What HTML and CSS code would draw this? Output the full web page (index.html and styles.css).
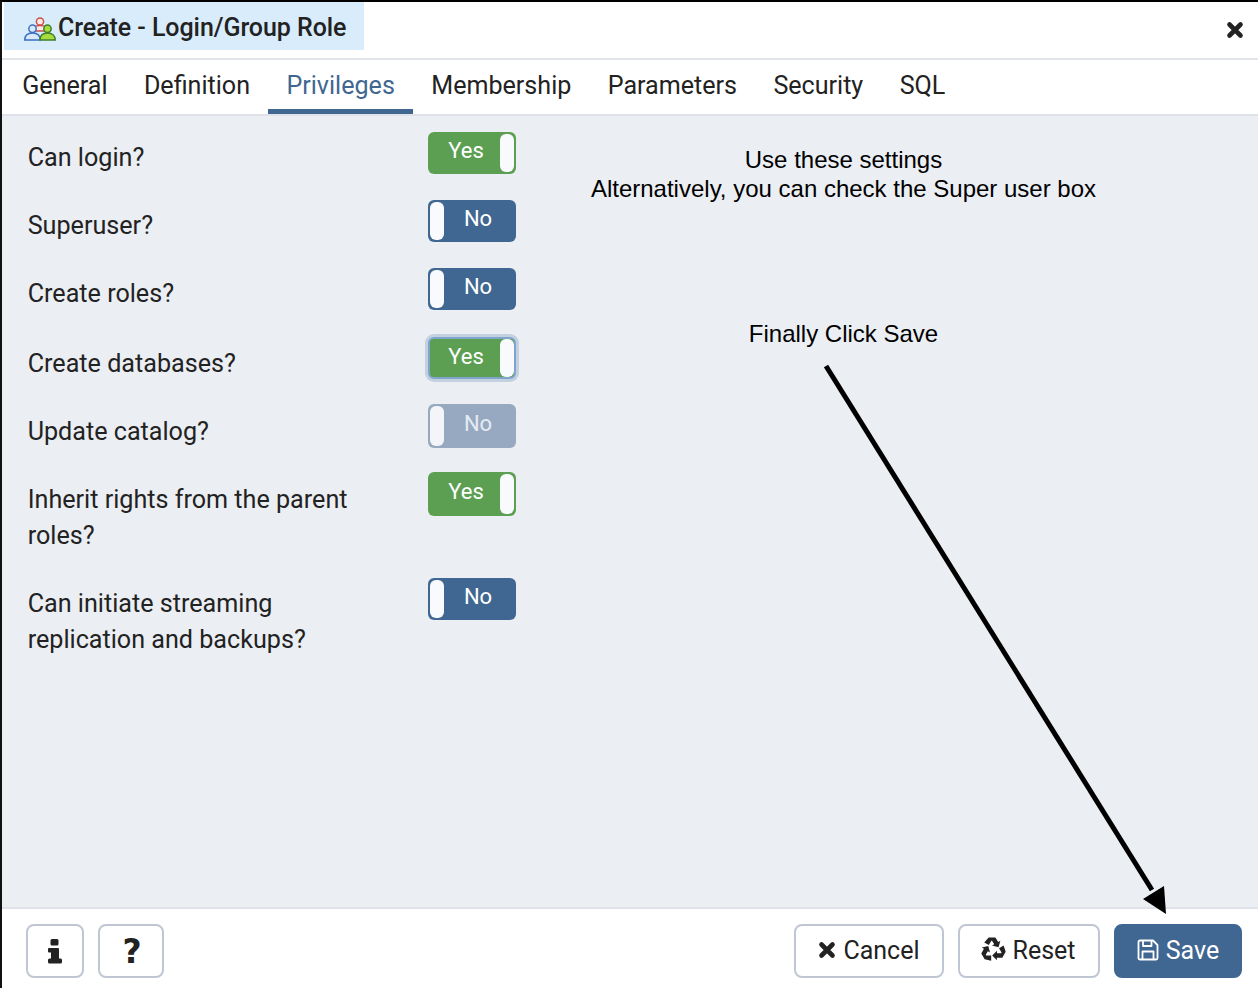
FILE: index.html
```html
<!DOCTYPE html>
<html lang="en">
<head>
  <meta charset="UTF-8" />
  <title>Create - Login/Group Role</title>
  <link rel="stylesheet" href="styles.css">
</head>
<body>
  <div class="dialog">
    <header class="titlebar">
      <div class="title">
        <svg class="title-icon" viewBox="0 0 32 24" width="32" height="24">
          <g fill="#fbe9e8" stroke="#c9504c" stroke-width="1.500">
            <circle cx="16" cy="4.500" r="3.600"/>
            <path d="M8 14c0-3.500 3.200-5.500 8-5.500s8 2 8 5.500z"/>
          </g>
          <g fill="#d9e8fa" stroke="#3a6fc4" stroke-width="1.500">
            <circle cx="8.500" cy="11.800" r="3.700"/>
            <path d="M.8 23c0-4.500 3-7 7.700-7s7.700 2.500 7.700 7z"/>
          </g>
          <g fill="#a8dc3c" stroke="#3f7d2c" stroke-width="1.500">
            <circle cx="23.500" cy="11.800" r="3.700"/>
            <path d="M16 23c0-4.500 3-7 7.500-7s7.700 2.500 7.700 7z"/>
          </g>
        </svg>
        <span>Create - Login/Group Role</span>
      </div>
      <svg class="close-icon" viewBox="0 0 18 18" width="18" height="18">
        <path d="M3.500 3.500l11 11M14.500 3.500l-11 11" stroke="#222" stroke-width="4.600" stroke-linecap="round"/>
      </svg>
    </header>

    <nav class="tabs">
      <a class="tab">General</a>
      <a class="tab">Definition</a>
      <a class="tab active">Privileges</a>
      <a class="tab">Membership</a>
      <a class="tab">Parameters</a>
      <a class="tab">Security</a>
      <a class="tab">SQL</a>
    </nav>

    <main class="panel">
      <form class="privileges">
        <div class="row">
          <label class="row-label">Can login?</label>
          <div class="switch yes"><span class="switch-text">Yes</span><span class="handle"></span></div>
        </div>
        <div class="row">
          <label class="row-label">Superuser?</label>
          <div class="switch no"><span class="handle"></span><span class="switch-text">No</span></div>
        </div>
        <div class="row">
          <label class="row-label">Create roles?</label>
          <div class="switch no"><span class="handle"></span><span class="switch-text">No</span></div>
        </div>
        <div class="row tall">
          <label class="row-label">Create databases?</label>
          <div class="switch yes focused"><span class="switch-text">Yes</span><span class="handle"></span></div>
        </div>
        <div class="row tall">
          <label class="row-label">Update catalog?</label>
          <div class="switch no disabled"><span class="handle"></span><span class="switch-text">No</span></div>
        </div>
        <div class="row tall wrap">
          <label class="row-label">Inherit rights from the parent roles?</label>
          <div class="switch yes"><span class="switch-text">Yes</span><span class="handle"></span></div>
        </div>
        <div class="row">
          <label class="row-label">Can initiate streaming replication and backups?</label>
          <div class="switch no"><span class="handle"></span><span class="switch-text">No</span></div>
        </div>
      </form>

      <aside class="notes">
        <p class="note-settings">Use these settings<br>Alternatively, you can check the Super user box</p>
        <p class="note-save">Finally Click Save</p>
      </aside>
    </main>

    <footer class="footer">
      <div class="footer-group">
        <button class="btn btn-info" type="button">
          <svg viewBox="0 0 14 26" width="14" height="26">
            <path d="M4 1h5a1.500 1.500 0 0 1 1.500 1.500v3.500a1.500 1.500 0 0 1-1.500 1.500h-5a1.500 1.500 0 0 1-1.500-1.500v-3.500a1.500 1.500 0 0 1 1.500-1.500zM2 10h8a1 1 0 0 1 1 1v9.500h1.500a1.500 1.500 0 0 1 1.500 1.500v2a1.500 1.500 0 0 1-1.500 1.500h-11a1.500 1.500 0 0 1-1.500-1.500v-2a1.500 1.500 0 0 1 1.500-1.500h1.500v-6h-2a1 1 0 0 1-1-1v-2.500a1 1 0 0 1 1-1z" fill="#222"/>
          </svg>
        </button>
        <button class="btn btn-help" type="button">?</button>
      </div>
      <div class="footer-group">
        <button class="btn btn-cancel" type="button">
          <svg viewBox="0 0 18 18" width="18" height="18">
            <path d="M3.500 3.500l11 11M14.500 3.500l-11 11" stroke="#222" stroke-width="4.600" stroke-linecap="round"/>
          </svg>
          Cancel
        </button>
        <button class="btn btn-reset" type="button">
          <svg viewBox="0 0 24 24" width="26" height="26">
            <g fill="#222">
              <path id="rc" d="M8 1.300h6.200l2.600 4.300 2-1.200-1.700 6-6-1.600 2-1.200-2-3.300h-.6l-2.400 4-4.200-2.400z"/>
              <use href="#rc" transform="rotate(120 12 12.500)"/>
              <use href="#rc" transform="rotate(240 12 12.500)"/>
            </g>
          </svg>
          Reset
        </button>
        <button class="btn btn-save" type="button">
          <svg viewBox="0 0 22 22" width="22" height="22">
            <g fill="none" stroke="#fff" stroke-width="1.800" stroke-linejoin="round">
              <path d="M3 1.500h13l4.500 4.500v13a1.500 1.500 0 0 1-1.500 1.500h-16a1.500 1.500 0 0 1-1.500-1.500v-16a1.500 1.500 0 0 1 1.500-1.500z"/>
              <path d="M6 1.500v5.500h8.500v-5.500M5.500 20.500v-8h11v8"/>
            </g>
          </svg>
          Save
        </button>
      </div>
    </footer>

    <svg class="arrow" viewBox="0 0 1258 988" width="1258" height="988">
      <path d="M826 366L1152 890" stroke="#000" stroke-width="5" fill="none"/>
      <path d="M1143 899L1166 914L1164 886z" fill="#000"/>
    </svg>
  </div>
</body>
</html>
```

FILE: styles.css
```css
html, body {
  margin: 0;
  padding: 0;
}

body {
  font-family: Roboto, "Liberation Sans", sans-serif;
  color: #222;
  background: #fff;
}

.dialog {
  position: relative;
  box-sizing: border-box;
  width: 1258px;
  height: 988px;
  display: flex;
  flex-direction: column;
  border-top: 2px solid #000;
  border-left: 2px solid #111;
  overflow: hidden;
}

/* title row */
.titlebar {
  display: flex;
  justify-content: space-between;
  height: 56px;
  border-bottom: 2px solid #e1e4e9;
  flex: none;
}

.title {
  display: flex;
  align-items: center;
  gap: 2px;
  box-sizing: border-box;
  width: 360px;
  height: 48px;
  margin-left: 2px;
  padding-left: 20px;
  padding-top: 2px;
  background: #d9ecfb;
  font-size: 25px;
  font-weight: 500;
  letter-spacing: -0.06px;
  white-space: nowrap;
}

.title-icon {
  margin-top: 4px;
}

.close-icon {
  margin: 19px 14px 0 0;
}

/* tabs */
.tabs {
  display: flex;
  flex: none;
  height: 54px;
  padding-left: 2px;
  border-bottom: 2px solid #dfe2e8;
}

.tab {
  box-sizing: border-box;
  height: 54px;
  padding: 10px 18.200px 0;
  font-size: 25.100px;
  line-height: 32px;
}

.tab.active {
  color: #3f6791;
  border-bottom: 5px solid #3f6791;
}

/* main area */
.panel {
  flex: 1;
  display: flex;
  background: #ebeef3;
}

.privileges {
  box-sizing: border-box;
  width: 514px;
  flex: none;
  padding: 16px 0 0 25.700px;
}

.row {
  display: flex;
  justify-content: space-between;
  align-items: flex-start;
  margin-bottom: 24px;
}

.row.tall {
  margin-bottom: 22px;
}

.row.tall.wrap {
  margin-bottom: 24px;
}

.row-label {
  width: 340px;
  padding-top: 8px;
  font-size: 25.150px;
  line-height: 36px;
}

.row.tall .row-label {
  padding-top: 10px;
}

.switch {
  box-sizing: border-box;
  width: 88px;
  height: 42px;
  flex: none;
  display: flex;
  align-items: stretch;
  padding: 2px;
  border-radius: 6px;
  color: #fff;
  font-size: 22px;
}

.row.tall .switch {
  height: 44px;
}

.row.tall .switch-text {
  line-height: 36px;
}

.switch.yes {
  background: #5c9f52;
}

.switch.yes .switch-text {
  padding-left: 2px;
}

.switch.no {
  background: #3f6791;
}

.switch.no .switch-text {
  padding-right: 2px;
}

.row.tall .switch.focused {
  height: 42px;
  margin-top: 1px;
  padding: 0;
  border: 2px solid #7fa5cc;
  box-shadow: 0 0 0 3px #c3d0e0;
}

.row.tall .focused .switch-text {
  line-height: 35px;
}

.switch.disabled {
  background: #97a9c1;
  color: #e6ebf2;
}

.handle {
  width: 14px;
  flex: none;
  background: #f9fafd;
  border-radius: 6px;
}

.switch.disabled .handle {
  background: #f3f5f9;
}

.switch-text {
  flex: 1;
  text-align: center;
  line-height: 34px;
}

.notes {
  width: 655px;
  flex: none;
  text-align: center;
  color: #000;
  font-family: "Liberation Sans", Arial, sans-serif;
  font-size: 24px;
  line-height: 29px;
}

.notes p {
  margin: 0;
}

.note-settings {
  padding-top: 29px;
}

.note-save {
  padding-top: 116px;
}

/* bottom buttons */
.footer {
  flex: none;
  box-sizing: border-box;
  height: 81px;
  display: flex;
  justify-content: space-between;
  padding: 15px 16px 0 24px;
  border-top: 2px solid #dfe2e8;
}

.footer-group {
  display: flex;
  gap: 14px;
}

.btn {
  box-sizing: border-box;
  height: 54px;
  display: flex;
  align-items: center;
  justify-content: center;
  gap: 7px;
  padding: 0 0 2px;
  background: #fff;
  border: 2px solid #c0c6d4;
  border-radius: 8px;
  color: #222;
  font-family: Roboto, sans-serif;
  font-size: 25px;
}

.btn-info {
  width: 58px;
  padding: 0;
}

.btn-help {
  width: 66px;
  padding: 0 0 0 2px;
  font-family: "DejaVu Sans", sans-serif;
  font-weight: bold;
  font-size: 33px;
}

.btn-cancel {
  width: 150px;
}

.btn-reset {
  width: 142px;
  gap: 6px;
}

.btn-reset svg {
  margin: -3px 0 0 -2px;
}

.btn-save {
  width: 128px;
  background: #3f6791;
  border-color: #3f6791;
  color: #fff;
}

.arrow {
  position: absolute;
  left: -2px;
  top: -2px;
  pointer-events: none;
}
```
